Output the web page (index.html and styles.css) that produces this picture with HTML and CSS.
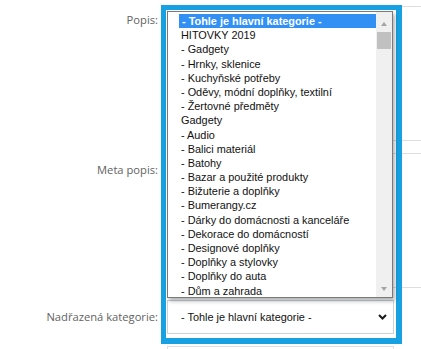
FILE: index.html
```html
<!DOCTYPE html>
<html lang="cs">
<head>
    <meta charset="UTF-8">
    <meta name="viewport" content="width=device-width, initial-scale=1.0">
    <title>Kategorie</title>
    <link rel="stylesheet" href="styles.css">
</head>
<body>
    <div class="form">
        <div class="row">
            <label class="label">Popis:</label>
            <div class="area"></div>
        </div>
        <div class="row">
            <label class="label label-meta">Meta popis:</label>
            <div class="area"></div>
        </div>
        <div class="row row-select">
            <label class="label">Nadřazená kategorie:</label>
            <div class="select">
                <span>- Tohle je hlavní kategorie -</span>
                <svg class="chevron" width="9" height="6" viewBox="0 0 9 6"><polyline points="1,1 4.5,4.5 8,1" fill="none" stroke="#1a1a1a" stroke-width="2"/></svg>
            </div>
        </div>
        <div class="row">
            <span class="label"></span>
            <div class="input"></div>
        </div>
    </div>

    <div class="frame"></div>

    <div class="popup">
        <ul class="options">
            <li class="selected">- Tohle je hlavní kategorie -</li>
            <li>HITOVKY 2019</li>
            <li>- Gadgety</li>
            <li>- Hrnky, sklenice</li>
            <li>- Kuchyňské potřeby</li>
            <li>- Oděvy, módní doplňky, textilní</li>
            <li>- Žertovné předměty</li>
            <li>Gadgety</li>
            <li>- Audio</li>
            <li>- Balici materiál</li>
            <li>- Batohy</li>
            <li>- Bazar a použité produkty</li>
            <li>- Bižuterie a doplňky</li>
            <li>- Bumerangy.cz</li>
            <li>- Dárky do domácnosti a kanceláře</li>
            <li>- Dekorace do domácností</li>
            <li>- Designové doplňky</li>
            <li>- Doplňky a stylovky</li>
            <li>- Doplňky do auta</li>
            <li>- Dům a zahrada</li>
        </ul>
        <div class="scrollbar">
            <span class="arrow arrow-up"></span>
            <span class="thumb"></span>
            <span class="arrow arrow-down"></span>
        </div>
    </div>
</body>
</html>
```

FILE: styles.css
```css
body {
    margin: 0;
    background: #fff;
    overflow: hidden;
    font-family: "Open Sans", sans-serif;
}
.form {
    padding-top: 6px;
}
.row {
    display: grid;
    grid-template-columns: 158px 300px;
    column-gap: 9px;
    margin-bottom: 12px;
}
.label {
    text-align: right;
    font-size: 11.2px;
    line-height: 14px;
    color: #626262;
    padding-top: 7px;
}
.label-meta {
    padding-top: 10px;
}
.area {
    height: 133px;
    border: 1px solid #dedede;
}
.row-select .label {
    padding-top: 0;
    align-self: center;
}
.select {
    width: 212px;
    height: 32px;
    border: 1px solid #c8d3da;
    padding-left: 13px;
    display: flex;
    align-items: center;
    justify-content: space-between;
    font-family: "Liberation Sans", Arial, sans-serif;
    font-size: 10.9px;
    color: #111;
}
.chevron {
    margin-right: 6px;
}
.input {
    width: 225px;
    height: 30px;
    border: 1px solid #dedede;
}
.frame {
    position: absolute;
    left: 161px;
    top: 5px;
    width: 230px;
    height: 328px;
    border-style: solid;
    border-color: #17a1e2;
    border-width: 5px 6px 6px 5px;
}
.popup {
    position: absolute;
    left: 167px;
    top: 11px;
    width: 224px;
    height: 285px;
    border: 1px solid #7a7a7a;
    background: #fff;
    box-shadow: 2px 3px 4px rgba(0, 0, 0, 0.3);
    display: flex;
}
.options {
    list-style: none;
    margin: 0;
    padding: 2px 0 0 11px;
    flex: 1;
    font-family: "Liberation Sans", Arial, sans-serif;
    font-size: 10.9px;
    color: #111;
}
.options li {
    height: 14.2px;
    line-height: 14.2px;
    padding-left: 2px;
    white-space: nowrap;
}
.options .selected {
    background: #3290f4;
    color: #fff;
    font-weight: bold;
    padding-left: 3px;
}
.scrollbar {
    width: 16px;
    background: #f0f0f0;
    display: flex;
    flex-direction: column;
    align-items: center;
}
.arrow {
    width: 0;
    height: 0;
    border-left: 3.5px solid transparent;
    border-right: 3.5px solid transparent;
}
.arrow-up {
    margin-top: 10px;
    border-bottom: 4px solid #a3a3a3;
}
.arrow-down {
    margin-top: auto;
    margin-bottom: 6px;
    border-top: 4px solid #a3a3a3;
}
.thumb {
    width: 14px;
    height: 17px;
    margin-top: 6px;
    background: #c1c1c1;
}
```
